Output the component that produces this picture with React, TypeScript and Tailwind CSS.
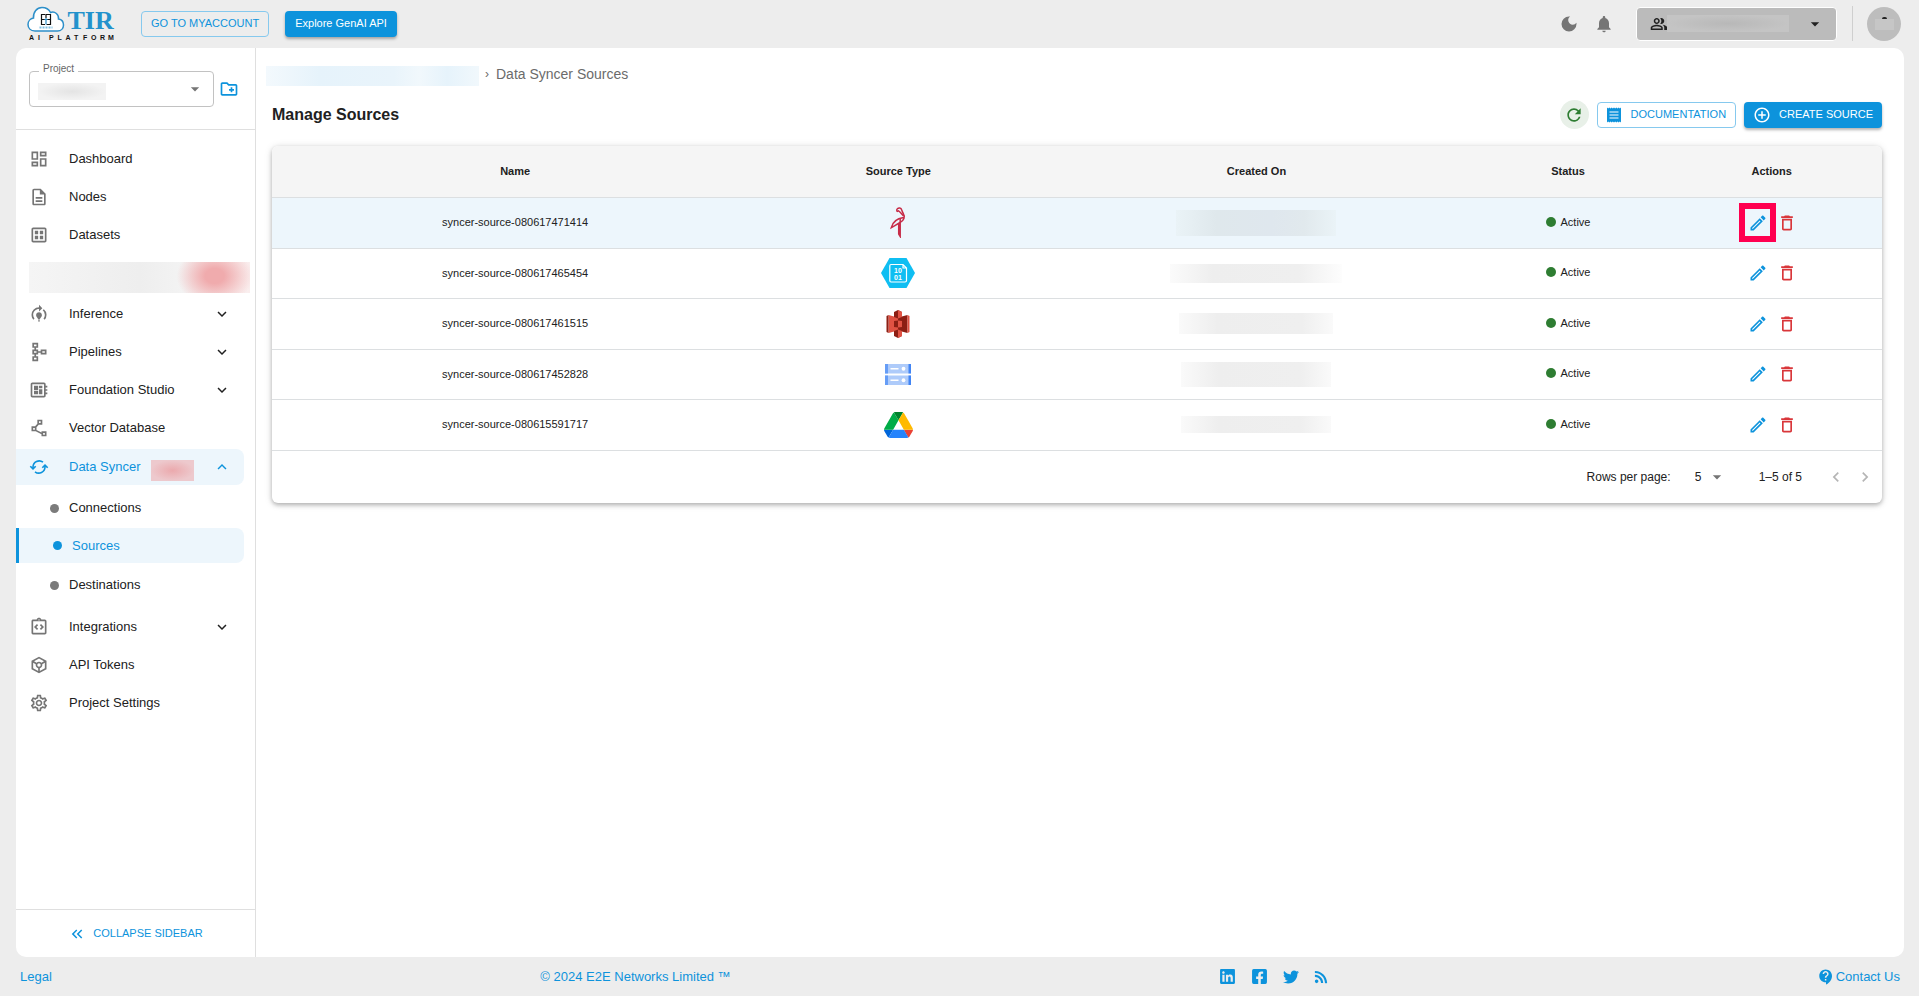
import { useState } from "react";
import type { ReactNode } from "react";
import type { IconType } from "react-icons";
import {
  MdAddCircleOutline,
  MdArrowDropDown,
  MdChevronLeft,
  MdChevronRight,
  MdContactSupport,
  MdDarkMode,
  MdDeleteOutline,
  MdKeyboardArrowDown,
  MdKeyboardArrowUp,
  MdKeyboardDoubleArrowLeft,
  MdModelTraining,
  MdNotifications,
  MdOutlineCreateNewFolder,
  MdOutlineDashboard,
  MdOutlineDataset,
  MdOutlineDescription,
  MdOutlineDeveloperBoard,
  MdOutlineEdit,
  MdOutlineIntegrationInstructions,
  MdOutlinePeopleAlt,
  MdOutlinePolyline,
  MdOutlineSchema,
  MdOutlineSettings,
  MdOutlineToken,
  MdRefresh,
} from "react-icons/md";
import { FaFacebookSquare, FaLinkedin, FaRss, FaTwitter } from "react-icons/fa";

function Logo() {
  return (
    <svg width="89" height="36" viewBox="0 0 89 36" role="img" aria-label="TIR AI Platform">
      <path
        d="M8 25 C3.5 25 1 22 1 18.5 C1 15 3.5 12.5 6.5 12 C6 6 10 1.5 15 1.5 C19 1.5 22 3.5 23.5 6.5 C28 5 32 8.5 31.5 13 C35 13.5 36.5 16 36.5 19 C36.5 22.5 34 25 30.5 25 Z"
        fill="#fff"
        stroke="#2d8fc9"
        strokeWidth="1.5"
      />
      <g fill="none" stroke="#111" strokeWidth="1.2">
        <path d="M18 8.5 H14.5 V18.5 H18" />
        <path d="M18.5 8.5 H23.5 V18.5 H19.5" />
        <path d="M14.500 13.5 H18 M20 13.5 H23.5 M19 8.500 V12" />
      </g>
      <path d="M17.5 13.5 H20.5 M19 12 V18.5" stroke="#2d8fc9" strokeWidth="1.2" />
      <path d="M12.5 21.5 H25.5" stroke="#7dbde0" strokeWidth="1.8" strokeDasharray="2 1" />
      <text x="40.5" y="23" fontFamily="Liberation Serif, serif" fontWeight="700" fontSize="26" fill="#2392cc">
        TIR
      </text>
      <text
        x="2 11 22 30.5 38.5 47 56 64 73 81"
        y="34"
        fontFamily="Liberation Sans, sans-serif"
        fontWeight="700"
        fontSize="7"
        fill="#111"
      >
        AIPLATFORM
      </text>
    </svg>
  );
}

function SyncIcon() {
  return (
    <svg viewBox="0 0 20 20" className="size-5 shrink-0" fill="none" stroke="currentColor" strokeWidth="1.6" aria-hidden="true">
      <path d="M4 11.5 V10 A6.2 6.2 0 0 1 14 5.2" />
      <path d="M16 8.5 V10 A6.2 6.2 0 0 1 6 14.8" />
      <path d="M1.3 11.9 L4 9.2 L6.700 11.9 M13.3 8.1 L16 10.8 L18.7 8.1" className="hidden" />
      <path d="M1.3 9.2 L4 11.9 L6.7 9.2 M13.3 10.8 L16 8.1 L18.7 10.8" />
    </svg>
  );
}

function ReceiptIcon() {
  return (
    <svg viewBox="0 0 14 16" className="h-4 w-[14px] shrink-0" aria-hidden="true">
      <path
        d="M0 0.5 L1.2 1.5 L2.3 0.5 L3.5 1.5 L4.7 0.5 L5.8 1.5 L7 0.5 L8.2 1.5 L9.3 0.5 L10.5 1.5 L11.7 0.5 L12.8 1.5 L14 0.5 V15.5 L12.8 14.5 L11.7 15.5 L10.5 14.5 L9.3 15.5 L8.2 14.5 L7 15.5 L5.8 14.5 L4.7 15.5 L3.5 14.5 L2.3 15.5 L1.2 14.5 L0 15.5 Z"
        fill="currentColor"
      />
      <path d="M2.5 5 H11.5 M2.5 8 H11.5 M2.5 11 H11.5" stroke="#fff" strokeWidth="1.2" />
    </svg>
  );
}

function MinioIcon() {
  return (
    <svg width="16" height="31" viewBox="0 0 16 31" fill="none" stroke="#c72c48" strokeWidth="1.5" aria-hidden="true">
      <path d="M7 4.5 C6 2 8 0.8 9.8 1 C12 1.3 11.5 3.5 13 6 C15.5 10 14 13.5 10 15.5 L1.2 20.8 C2.5 15 7 11.5 13.5 10.5" />
      <path d="M6.8 4.5 L8.5 3.8 C10.5 5 11.5 7 13.5 9 M8.7 16 V27 L10.2 29.5 V11" />
    </svg>
  );
}

function BlobIcon() {
  return (
    <svg width="34" height="30" viewBox="0 0 34 30" aria-hidden="true">
      <path d="M8.5 0 H25.5 L34 15 L25.5 30 H8.5 L0 15 Z" fill="#0fbef2" />
      <path
        d="M10 6.5 H22 L25.5 10 V22.5 Q25.5 24 24 24 H10 Q8.8 24 8.8 22.5 V8 Q8.8 6.5 10 6.5 Z M22 6.5 V10 H25.5"
        fill="none"
        stroke="#fff"
        strokeWidth="1.2"
      />
      <g fontFamily="Liberation Sans, sans-serif" fontWeight="700" fontSize="7" fill="#fff" textAnchor="middle">
        <text x="17" y="14.5">10</text>
        <text x="17" y="21.5">01</text>
      </g>
    </svg>
  );
}

function BucketIcon() {
  return (
    <svg width="24" height="28" viewBox="0 0 24 28" aria-hidden="true">
      <path d="M2.5 5 L8 6.5 H12 V20.5 L2.5 23 Z" fill="#e05243" />
      <path d="M0.5 6 L2.5 5 V23 L0.5 22 Z" fill="#8c1f14" />
      <path d="M21.5 5 L12 7.5 V20.5 L21.5 23 Z" fill="#8c1f14" />
      <path d="M21.5 5 L23.5 6 V22 L21.5 23 Z" fill="#e05243" />
      <path d="M12 0 L8 2 V7 L12 8.5 L16 7 V2 Z" fill="#8c1f14" />
      <path d="M12 0 L16 2 V7 L12 8.5 Z" fill="#e05243" />
      <path d="M12 28 L8 26 V21 L12 19.5 L16 21 V26 Z" fill="#8c1f14" />
      <path d="M12 28 L16 26 V21 L12 19.5 Z" fill="#e05243" />
      <path d="M8 11 L12 10.5 V17.5 L8 17 Z" fill="#8c1f14" />
      <path d="M16 11 L12 10.5 V17.5 L16 17 Z" fill="#e05243" />
    </svg>
  );
}

function CloudStorageIcon() {
  return (
    <svg width="26" height="21" viewBox="0 0 26 21" aria-hidden="true">
      {[0, 11.5].map((y) => (
        <g key={y}>
          <rect y={y} width="26" height="9.5" fill="#aecbfa" />
          <rect y={y} width="3" height="9.5" fill="#669df6" />
          <rect x="23.5" y={y} width="2.5" height="9.5" fill="#4285f4" />
          <rect x="5.5" y={y + 4} width="8" height="1.5" fill="#fff" />
          <circle cx="18.5" cy={y + 4.75} r="1.9" fill="#fff" />
        </g>
      ))}
    </svg>
  );
}

function DriveIcon() {
  return (
    <svg width="29" height="26" viewBox="0 0 87.3 78" aria-hidden="true">
      <path d="m6.6 66.85 3.85 6.65c.8 1.4 1.95 2.5 3.3 3.3l13.75-23.8h-27.5c0 1.55.4 3.1 1.2 4.5z" fill="#0066da" />
      <path d="m43.65 25-13.75-23.8c-1.35.8-2.5 1.9-3.3 3.3l-25.4 44a9.06 9.06 0 0 0 -1.2 4.5h27.5z" fill="#00ac47" />
      <path d="m73.55 76.8c1.35-.8 2.5-1.9 3.3-3.3l1.6-2.75 7.65-13.25c.8-1.4 1.2-2.95 1.2-4.5h-27.502l5.852 11.5z" fill="#ea4335" />
      <path d="m43.65 25 13.75-23.8c-1.35-.8-2.9-1.2-4.5-1.2h-18.5c-1.6 0-3.15.45-4.5 1.2z" fill="#00832d" />
      <path d="m59.8 53h-32.3l-13.75 23.8c1.35.8 2.9 1.2 4.5 1.2h50.8c1.6 0 3.15-.45 4.5-1.2z" fill="#2684fc" />
      <path d="m73.4 26.5-12.7-22c-.8-1.4-1.95-2.5-3.3-3.3l-13.75 23.8 16.15 28h27.45c0-1.55-.4-3.1-1.2-4.5z" fill="#ffba00" />
    </svg>
  );
}

type Source = { name: string; icon: ReactNode; mask: string };

const sources: Source[] = [
  {
    name: "syncer-source-080617471414",
    icon: <MinioIcon />,
    mask: "w-[160px] h-[26px] bg-[linear-gradient(90deg,#eaf3f7,#dfe8ec_25%,#dfe7ee_60%,#e1e9ed_80%,#eaf3f7)]",
  },
  {
    name: "syncer-source-080617465454",
    icon: <BlobIcon />,
    mask: "w-[172px] h-[19px] bg-[linear-gradient(90deg,#fbfbfb,#eeeeee_25%,#efefef_75%,#fdfdfd)]",
  },
  {
    name: "syncer-source-080617461515",
    icon: <BucketIcon />,
    mask: "w-[154px] h-[21px] bg-[linear-gradient(90deg,#fafafa,#eeeeee_25%,#efefef_80%,#fafafa)]",
  },
  {
    name: "syncer-source-080617452828",
    icon: <CloudStorageIcon />,
    mask: "w-[150px] h-[25px] bg-[linear-gradient(90deg,#fafafa,#eeeeee_25%,#efefef_80%,#fafafa)]",
  },
  {
    name: "syncer-source-080615591717",
    icon: <DriveIcon />,
    mask: "w-[150px] h-[17px] bg-[linear-gradient(90deg,#fafafa,#eeeeee_25%,#efefef_80%,#fafafa)]",
  },
];

function NavItem({ icon: Icon, label, expandable = false }: { icon: IconType; label: string; expandable?: boolean }) {
  return (
    <li>
      <a href="#" className="flex h-[38px] items-center px-[13px]">
        <Icon className="size-5 shrink-0 text-[#757575]" />
        <span className="ml-5 flex-1">{label}</span>
        {expandable && <MdKeyboardArrowDown className="mr-[11px] size-[18px]" />}
      </a>
    </li>
  );
}

function SubItem({ label, active = false }: { label: string; active?: boolean }) {
  return (
    <li>
      <a
        href="#"
        aria-current={active ? "page" : undefined}
        className={
          active
            ? "mt-px mr-[11px] mb-[3px] flex h-[35px] items-center gap-[10px] rounded-r-lg border-l-[3px] border-[#0d93dc] bg-[#edf6fc] pl-[34px] text-[#0d93dc]"
            : "flex h-[38px] items-center gap-[10px] pl-[34px]"
        }
      >
        <span className={active ? "size-[9px] rounded-full bg-[#0d93dc]" : "size-[9px] rounded-full bg-[#7b7b7b]"} />
        {label}
      </a>
    </li>
  );
}

function Sidebar() {
  return (
    <aside className="flex w-[240px] shrink-0 flex-col border-r border-[#dfdfdf]">
      <div className="flex h-[82px] items-center gap-[5px] border-b border-[#dfdfdf] pl-[13px]">
        <div className="relative h-9 w-[185px]">
          <label htmlFor="project" className="absolute -top-2.5 left-[10px] bg-white px-1 text-[10px] leading-4 text-[#666]">
            Project
          </label>
          <select id="project" className="h-9 w-full appearance-none rounded border border-[#c2c2c2] bg-transparent">
            <option value="" />
          </select>
          <span className="absolute top-3 left-[9px] h-[17px] w-[68px] bg-[radial-gradient(closest-side,#e4e4e4,#f3f3f3)]" />
          <MdArrowDropDown className="pointer-events-none absolute top-2 right-[9px] size-5 text-[#757575]" />
        </div>
        <button type="button" aria-label="New project" className="text-[#0d93dc]">
          <MdOutlineCreateNewFolder className="size-5" />
        </button>
      </div>

      <nav className="flex-1 pt-[10px]">
        <ul>
          <NavItem icon={MdOutlineDashboard} label="Dashboard" />
          <NavItem icon={MdOutlineDescription} label="Nodes" />
          <NavItem icon={MdOutlineDataset} label="Datasets" />
          <li
            aria-hidden="true"
            className="mt-2 mr-[5px] mb-0.5 ml-[13px] h-[31px] bg-[radial-gradient(ellipse_38px_30px_at_84%_45%,#f0abad_25%,transparent),linear-gradient(90deg,#f5f5f5,#eeeeee_50%,#f3f3f3_70%,#faeeee)]"
          />
          <NavItem icon={MdModelTraining} label="Inference" expandable />
          <NavItem icon={MdOutlineSchema} label="Pipelines" expandable />
          <NavItem icon={MdOutlineDeveloperBoard} label="Foundation Studio" expandable />
          <NavItem icon={MdOutlinePolyline} label="Vector Database" />
          <li>
            <a
              href="#"
              aria-expanded="true"
              className="mt-0.5 mr-[11px] mb-1 flex h-9 items-center rounded-r-lg bg-[#edf6fc] pl-[13px] text-[#0d93dc]"
            >
              <SyncIcon />
              <span className="ml-5">Data Syncer</span>
              <span className="mt-1.5 ml-[10px] h-[21px] w-[43px] bg-[radial-gradient(closest-side,#eba9ad,#edc9cd)]" />
              <MdKeyboardArrowUp className="mr-[13px] ml-auto size-[18px]" />
            </a>
            <ul className="mb-1">
              <SubItem label="Connections" />
              <SubItem label="Sources" active />
              <SubItem label="Destinations" />
            </ul>
          </li>
          <NavItem icon={MdOutlineIntegrationInstructions} label="Integrations" expandable />
          <NavItem icon={MdOutlineToken} label="API Tokens" />
          <NavItem icon={MdOutlineSettings} label="Project Settings" />
        </ul>
      </nav>

      <div className="flex h-12 items-center justify-center border-t border-[#dfdfdf]">
        <button type="button" className="flex items-center gap-[7px] text-[11px] text-[#0d93dc]">
          <MdKeyboardDoubleArrowLeft className="size-[18px]" />
          COLLAPSE SIDEBAR
        </button>
      </div>
    </aside>
  );
}

function SourcesTable() {
  const [rowsPerPage, setRowsPerPage] = useState("5");
  return (
    <div className="mt-[17px] overflow-hidden rounded-md bg-white shadow-[0_2px_4px_rgba(0,0,0,0.25),0_1px_8px_rgba(0,0,0,0.12)]">
      <table className="w-full table-fixed border-collapse text-center text-[11px]">
        <thead>
          <tr className="h-[51px] border-b border-[#dcdfe1] bg-[#f5f5f5]">
            <th className="w-[30.2%]">Name</th>
            <th className="w-[17.4%]">Source Type</th>
            <th className="w-[27.1%]">Created On</th>
            <th className="w-[11.6%]">Status</th>
            <th>Actions</th>
          </tr>
        </thead>
        <tbody>
          {sources.map((source, index) => (
            <tr key={source.name} className="h-[51px] border-b border-[#dcdfe1] first:bg-[#edf6fc] even:h-[50px]">
              <td>{source.name}</td>
              <td>
                <div className="flex justify-center">{source.icon}</div>
              </td>
              <td>
                <div className={`mx-auto ${source.mask}`} />
              </td>
              <td>
                <span className="inline-flex items-center gap-[5px]">
                  <span className="size-[10px] rounded-full bg-[#2e7d32]" />
                  Active
                </span>
              </td>
              <td>
                <div className="flex items-center justify-center">
                  <button
                    type="button"
                    aria-label={`Edit ${source.name}`}
                    className={
                      index === 0
                        ? "flex h-[39px] w-[37px] items-center justify-center border-6 border-[#ff0050] text-[#0d93dc]"
                        : "flex h-[39px] w-[37px] items-center justify-center text-[#0d93dc]"
                    }
                  >
                    <MdOutlineEdit className="size-5 shrink-0" />
                  </button>
                  <button
                    type="button"
                    aria-label={`Delete ${source.name}`}
                    className="mr-[7px] flex h-9 w-[21px] items-center justify-center text-[#d9363a]"
                  >
                    <MdDeleteOutline className="size-5 shrink-0" />
                  </button>
                </div>
              </td>
            </tr>
          ))}
        </tbody>
      </table>
      <div className="flex h-[52px] items-center justify-end pr-[7px] text-xs">
        <label htmlFor="rows" className="mr-[22px]">
          Rows per page:
        </label>
        <div className="relative mr-[30px] flex items-center">
          <select
            id="rows"
            value={rowsPerPage}
            onChange={(event) => setRowsPerPage(event.target.value)}
            className="w-9 appearance-none bg-transparent pl-0.5"
          >
            <option>5</option>
          </select>
          <MdArrowDropDown className="pointer-events-none absolute right-0.5 size-5 text-[#757575]" />
        </div>
        <span>1–5 of 5</span>
        <button type="button" disabled aria-label="Previous page" className="ml-6 text-[#b5b5b5]">
          <MdChevronLeft className="size-5" />
        </button>
        <button type="button" disabled aria-label="Next page" className="ml-[9px] text-[#b5b5b5]">
          <MdChevronRight className="size-5" />
        </button>
      </div>
    </div>
  );
}

function Header() {
  return (
    <header className="flex h-12 items-center pr-[18px] pb-px pl-[27px]">
      <a href="#">
        <Logo />
      </a>
      <button type="button" className="ml-[25px] h-[26px] rounded border border-[#86c9ee] px-[9px] text-[11px] text-[#0d93dc]">
        GO TO MYACCOUNT
      </button>
      <button
        type="button"
        className="ml-4 h-[26px] rounded bg-[#0d93dc] px-[10px] text-[11px] text-white shadow-[0_2px_3px_rgba(0,0,0,0.3)]"
      >
        Explore GenAI API
      </button>
      <div className="ml-auto flex items-center">
        <button type="button" aria-label="Dark mode" className="text-[#757575]">
          <MdDarkMode className="size-5" />
        </button>
        <button type="button" aria-label="Notifications" className="ml-[15px] text-[#757575]">
          <MdNotifications className="size-5" />
        </button>
        <div className="relative ml-[22px] flex h-[34px] w-[201px] items-center">
          <select aria-label="Team" className="size-full appearance-none rounded border border-white bg-[#bbb]">
            <option value="" />
          </select>
          <MdOutlinePeopleAlt className="pointer-events-none absolute left-[14px] size-[18px]" />
          <span className="pointer-events-none absolute left-[31px] h-[17px] w-[122px] bg-[radial-gradient(closest-side,#b8b8b8,#c4c4c4)]" />
          <MdArrowDropDown className="pointer-events-none absolute right-3 size-5" />
        </div>
        <span className="ml-[15px] h-[35px] w-px bg-[#cfcfcf]" />
        <button
          type="button"
          aria-label="Account"
          className="ml-[14px] flex size-[34px] flex-col items-center justify-center rounded-full bg-[#bdbdbd]"
        >
          <span className="h-0.5 w-[5px] rounded-t-sm bg-[#222]" />
          <span className="h-[11px] w-[19px] bg-[#c6c6c6]" />
        </button>
      </div>
    </header>
  );
}

function Footer() {
  return (
    <footer className="flex h-[39px] items-center justify-between pr-[19px] pl-5 text-[13px] text-[#0d93dc]">
      <a href="#">Legal</a>
      <p>© 2024 E2E Networks Limited ™</p>
      <div className="flex items-center gap-[15px]">
        <a href="#" aria-label="LinkedIn">
          <FaLinkedin className="size-[17px]" />
        </a>
        <a href="#" aria-label="Facebook">
          <FaFacebookSquare className="size-[17px]" />
        </a>
        <a href="#" aria-label="Twitter">
          <FaTwitter className="size-4" />
        </a>
        <a href="#" aria-label="RSS">
          <FaRss className="size-[14px]" />
        </a>
      </div>
      <a href="#" className="flex items-center gap-px">
        <MdContactSupport className="size-[18px]" />
        Contact Us
      </a>
    </footer>
  );
}

export default function App() {
  return (
    <div className="flex min-h-screen flex-col bg-[#ededed] font-['Liberation_Sans',Arial,sans-serif] text-[13px] text-[#212121]">
      <Header />
      <div className="mr-[15px] ml-4 flex flex-1 rounded-[10px] bg-white">
        <Sidebar />
        <main className="min-w-0 flex-1 pr-[22px] pl-4">
          <nav aria-label="Breadcrumb" className="-ml-1.5 flex h-[52px] items-center text-sm text-[#6b6b6b]">
            <span className="mt-1 h-5 w-[213px] bg-[linear-gradient(90deg,#f3f9fd,#e6f3fb_25%,#e9f4fb_60%,#f1f8fc_72%,#e6f3fb_85%,#f1f8fc)]" />
            <span className="mr-[7px] ml-1.5 text-xs">›</span>
            <span>Data Syncer Sources</span>
          </nav>
          <div className="flex items-center">
            <h1 className="flex-1 text-base font-bold">Manage Sources</h1>
            <button
              type="button"
              aria-label="Refresh"
              className="flex size-[29px] items-center justify-center rounded-full bg-[#e8f0e8] text-[#2e7d32]"
            >
              <MdRefresh className="size-5" />
            </button>
            <a
              href="#"
              className="ml-2 flex h-[26px] items-center gap-[10px] rounded border border-[#86c9ee] px-[9px] text-[11px] text-[#0d93dc]"
            >
              <ReceiptIcon />
              DOCUMENTATION
            </a>
            <button
              type="button"
              className="ml-2 flex h-[26px] items-center gap-2 rounded bg-[#0d93dc] px-[9px] text-[11px] text-white shadow-[0_2px_3px_rgba(0,0,0,0.3)]"
            >
              <MdAddCircleOutline className="size-[18px]" />
              CREATE SOURCE
            </button>
          </div>
          <SourcesTable />
        </main>
      </div>
      <Footer />
    </div>
  );
}
